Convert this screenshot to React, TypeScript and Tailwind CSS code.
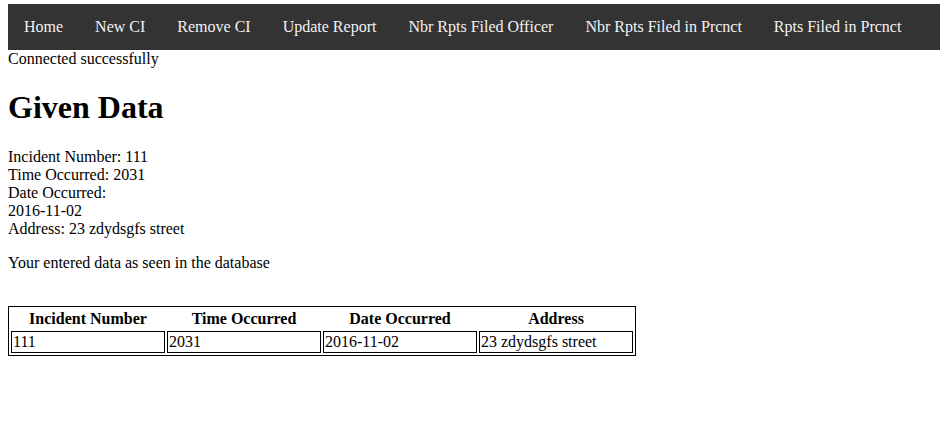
import React from "react";

const links = [
  "Home",
  "New CI",
  "Remove CI",
  "Update Report",
  "Nbr Rpts Filed Officer",
  "Nbr Rpts Filed in Prcnct",
  "Rpts Filed in Prcnct",
];

export default function App() {
  return (
    <div className="px-2 pt-1 font-['Liberation_Serif',serif] text-[16px] leading-[normal] text-black bg-white min-h-[438px]">
      <nav className="flex bg-[#333333]">
        {links.map((l) => (
          <a key={l} href="#" className="block px-4 py-[14px] text-[#f2f2f2] no-underline">
            {l}
          </a>
        ))}
      </nav>
      <div>Connected successfully</div>
      <h1 className="text-[32px] font-bold my-[21.44px]">Given Data</h1>
      <div>Incident Number: 111</div>
      <div>Time Occurred: 2031</div>
      <div>Date Occurred:</div>
      <div>2016-11-02</div>
      <div>Address: 23 zdydsgfs street</div>
      <p className="my-4">Your entered data as seen in the database</p>
      <br />
      <table className="border border-black border-separate border-spacing-[2px]">
        <thead>
          <tr>
            <th className="w-[154px] p-[1px] font-bold text-center">Incident Number</th>
            <th className="w-[154px] p-[1px] font-bold text-center">Time Occurred</th>
            <th className="w-[154px] p-[1px] font-bold text-center">Date Occurred</th>
            <th className="w-[154px] p-[1px] font-bold text-center">Address</th>
          </tr>
        </thead>
        <tbody>
          <tr>
            <td className="border border-black p-[1px] text-left">111</td>
            <td className="border border-black p-[1px] text-left">2031</td>
            <td className="border border-black p-[1px] text-left">2016-11-02</td>
            <td className="border border-black p-[1px] text-left">23 zdydsgfs street</td>
          </tr>
        </tbody>
      </table>
    </div>
  );
}
